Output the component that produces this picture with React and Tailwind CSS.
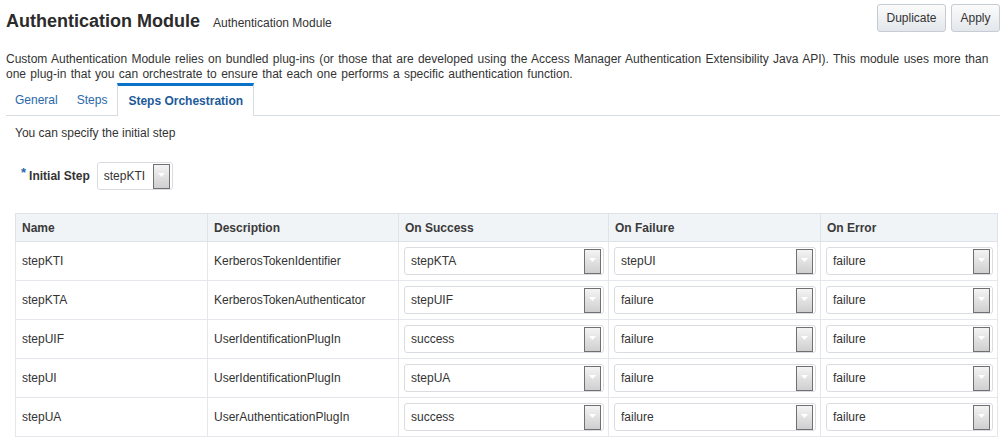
const font = { fontFamily: '"Liberation Sans", Arial, sans-serif' };

const rows = [
  { name: "stepKTI", desc: "KerberosTokenIdentifier", ok: "stepKTA", fail: "stepUI", err: "failure" },
  { name: "stepKTA", desc: "KerberosTokenAuthenticator", ok: "stepUIF", fail: "failure", err: "failure" },
  { name: "stepUIF", desc: "UserIdentificationPlugIn", ok: "success", fail: "failure", err: "failure" },
  { name: "stepUI", desc: "UserIdentificationPlugIn", ok: "stepUA", fail: "failure", err: "failure" },
  { name: "stepUA", desc: "UserAuthenticationPlugIn", ok: "success", fail: "failure", err: "failure" },
];

function Choice({ value, className = "" }) {
  return (
    <div className={"flex h-[28px] items-center rounded-[3px] border border-[#d9dde1] bg-white " + className}>
      <span className="flex-1 truncate pl-[6px] text-[12px] text-[#333]">{value}</span>
      <span className="mr-[2px] flex h-[25px] w-[17px] items-center justify-center border border-[#707070] bg-gradient-to-b from-[#f4f4f4] to-[#cfcfcf]">
        <svg width="7" height="4" viewBox="0 0 7 4" className="-mt-[2px]">
          <path d="M0 0h7L3.5 4z" fill="#ffffff" />
        </svg>
      </span>
    </div>
  );
}

export default function App() {
  return (
    <div className="h-[440px] w-[1006px] overflow-hidden bg-white text-[#333]" style={font}>
      {/* Header */}
      <div className="flex items-start justify-between px-[6px] pt-[4px]">
        <div className="flex items-baseline gap-[13px] pt-[6px]">
          <h1 className="text-[18px] font-bold leading-[22px] text-[#2b2b2b]">Authentication Module</h1>
          <span className="text-[12px] text-[#333]">Authentication Module</span>
        </div>
        <div className="flex gap-[5px]">
          <button className="h-[28px] w-[69px] rounded-[3px] border border-[#c5ccd3] bg-gradient-to-b from-[#fbfbfb] to-[#e3e7eb] text-[12px] text-[#333]">
            Duplicate
          </button>
          <button className="h-[28px] w-[49px] rounded-[3px] border border-[#c5ccd3] bg-gradient-to-b from-[#fbfbfb] to-[#e3e7eb] text-[12px] text-[#333]">
            Apply
          </button>
        </div>
      </div>

      {/* Description */}
      <p className="mt-[20px] px-[6px] text-[12px] leading-[15px] text-[#333] [word-spacing:1px]">
        Custom Authentication Module relies on bundled plug-ins (or those that are developed using the Access Manager Authentication Extensibility Java API). This module uses more than
        <br />
        one plug-in that you can orchestrate to ensure that each one performs a specific authentication function.
      </p>

      {/* Tabs */}
      <div className="mx-[6px] mt-[2px] flex h-[32px] items-end border-b border-[#d6dde3]">
        <div className="flex h-full items-center px-[9px] text-[12px] text-[#2a68a9]">General</div>
        <div className="flex h-full items-center px-[10px] text-[12px] text-[#2a68a9]">Steps</div>
        <div className="-mb-px flex h-[33px] items-center border-x border-t-[3px] border-x-[#d6dde3] border-t-[#0a72c8] bg-white px-[10px] text-[12px] font-bold text-[#1d5a9a]">
          Steps Orchestration
        </div>
      </div>

      {/* Body */}
      <div className="px-[15px]">
        <p className="mt-[10px] text-[12px] leading-[15px] text-[#333]">You can specify the initial step</p>

        <div className="mt-[21px] flex items-center pl-[6px]">
          <span className="-mt-[6px] mr-[3px] text-[13px] font-bold text-[#2a68a9]">*</span>
          <span className="text-[12px] font-bold text-[#333]">Initial Step</span>
          <Choice value="stepKTI" className="ml-[7px] w-[76px]" />
        </div>

        {/* Table */}
        <table className="mt-[23px] w-[982px] table-fixed border-collapse border border-[#dde3e8] text-[12px]">
          <colgroup>
            <col className="w-[192px]" />
            <col className="w-[191px]" />
            <col className="w-[210px]" />
            <col className="w-[212px]" />
            <col className="w-[177px]" />
          </colgroup>
          <thead>
            <tr className="h-[28px] bg-[#f1f4f7]">
              {["Name", "Description", "On Success", "On Failure", "On Error"].map((h) => (
                <th key={h} className="border border-[#dde3e8] px-[6px] text-left font-bold text-[#3a3a3a]">
                  {h}
                </th>
              ))}
            </tr>
          </thead>
          <tbody>
            {rows.map((r) => (
              <tr key={r.name} className="h-[39px]">
                <td className="border border-[#e4e8ec] px-[6px] text-[#333]">{r.name}</td>
                <td className="border border-[#e4e8ec] px-[6px] text-[#333]">{r.desc}</td>
                <td className="border border-[#e4e8ec] pl-[5px] pr-[4px]">
                  <Choice value={r.ok} />
                </td>
                <td className="border border-[#e4e8ec] pl-[5px] pr-[4px]">
                  <Choice value={r.fail} />
                </td>
                <td className="border border-[#e4e8ec] pl-[5px] pr-[4px]">
                  <Choice value={r.err} />
                </td>
              </tr>
            ))}
          </tbody>
        </table>
      </div>
    </div>
  );
}
